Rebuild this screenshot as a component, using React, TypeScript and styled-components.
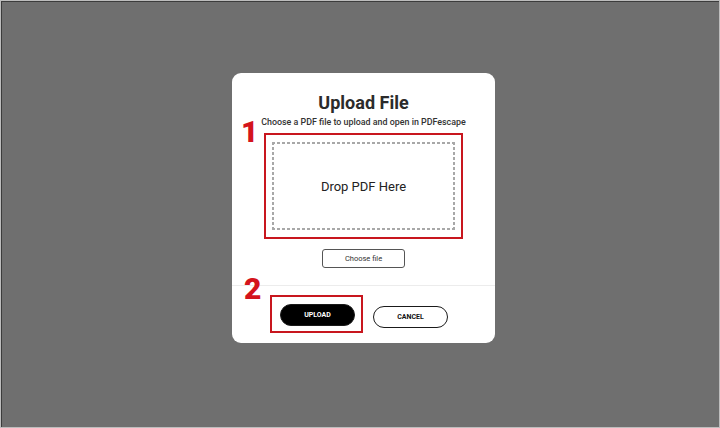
import React from "react";
import styled, { createGlobalStyle } from "styled-components";

const GlobalStyle = createGlobalStyle`
  html, body {
    margin: 0;
    padding: 0;
    background: #6f6f6f;
  }
  body {
    font-family: Roboto, "Liberation Sans", Arial, sans-serif;
  }
`;

const Screen = styled.div`
  box-sizing: border-box;
  width: 720px;
  height: 428px;
  border: 1px solid #bdbdbd;
  box-shadow: inset 1px 1px 0 #3c3c3c;
  background: #6f6f6f;
  display: flex;
  align-items: flex-start;
  justify-content: flex-start;
  padding: 72px 0 0 231px;
`;

const Modal = styled.section`
  box-sizing: border-box;
  width: 263px;
  height: 270px;
  background: #fff;
  border-radius: 9px;
  display: flex;
  flex-direction: column;
`;

const Body = styled.div`
  display: flex;
  flex-direction: column;
  align-items: center;
  padding-top: 20px;
  height: 213px;
  box-sizing: border-box;
  border-bottom: 1px solid #ececec;
`;

const Title = styled.h2`
  margin: 0;
  font-size: 18px;
  line-height: 20px;
  font-weight: 700;
  color: #2b2b2b;
`;

const Subtitle = styled.p`
  margin: 4px 0 0;
  font-size: 8.9px;
  line-height: 10px;
  font-weight: 500;
  color: #333;
`;

const Step = styled.div<{ $mt?: number }>`
  display: flex;
  align-items: flex-start;
  position: relative;
  margin-top: ${(p) => p.$mt ?? 0}px;
`;

const StepNumber = styled.span<{ $top: number; $left: number }>`
  position: absolute;
  top: ${(p) => p.$top}px;
  left: ${(p) => p.$left}px;
  font-family: Roboto, "Liberation Sans", sans-serif;
  font-weight: 900;
  font-size: 30px;
  line-height: 30px;
  color: #d4141c;
`;

const Highlight = styled.div<{ $w: number; $h: number; $pad?: string }>`
  box-sizing: border-box;
  width: ${(p) => p.$w}px;
  height: ${(p) => p.$h}px;
  border: 2px solid #c8161e;
  display: flex;
  align-items: ${(p) => (p.$pad ? "flex-start" : "center")};
  justify-content: ${(p) => (p.$pad ? "flex-start" : "center")};
  padding: ${(p) => p.$pad ?? "0"};
`;

const dash = "#a8a8a8";

const DropZone = styled.div`
  box-sizing: border-box;
  width: 183px;
  height: 88px;
  background-image:
    repeating-linear-gradient(90deg, ${dash} 0 3px, transparent 3px 5px),
    repeating-linear-gradient(90deg, ${dash} 0 3px, transparent 3px 5px),
    repeating-linear-gradient(180deg, ${dash} 0 3px, transparent 3px 5px),
    repeating-linear-gradient(180deg, ${dash} 0 3px, transparent 3px 5px);
  background-size: 100% 2px, 100% 2px, 2px 100%, 2px 100%;
  background-position: 0 0, 0 100%, 0 0, 100% 0;
  background-repeat: no-repeat;
  display: flex;
  align-items: center;
  justify-content: center;
  font-size: 13px;
  color: #222;
`;

const ChooseButton = styled.button`
  box-sizing: border-box;
  margin-top: 10px;
  width: 83px;
  height: 19px;
  border: 1px solid #555;
  border-radius: 3px;
  background: #fff;
  font-family: Roboto, "Liberation Sans", sans-serif;
  font-size: 7.5px;
  color: #333;
  padding: 0;
`;

const Footer = styled.div`
  display: flex;
  align-items: flex-start;
  padding: 9px 0 0 38px;
  gap: 10px;
`;

const Pill = styled.button<{ $dark?: boolean }>`
  box-sizing: border-box;
  width: 75px;
  height: 22px;
  border-radius: 11px;
  border: 1.5px solid #1a1a1a;
  background: ${(p) => (p.$dark ? "#000" : "#fff")};
  color: ${(p) => (p.$dark ? "#fff" : "#111")};
  font-family: Roboto, "Liberation Sans", sans-serif;
  font-weight: 700;
  font-size: 7px;
  padding: 0;
`;

const CancelWrap = styled.div`
  padding-top: 9px;
`;

export default function App() {
  return (
    <>
      <GlobalStyle />
      <Screen>
        <Modal>
          <Body>
            <Title>Upload File</Title>
            <Subtitle>Choose a PDF file to upload and open in PDFescape</Subtitle>
            <Step $mt={6}>
              <StepNumber $top={-16} $left={-23}>1</StepNumber>
              <Highlight $w={199} $h={106}>
                <DropZone>Drop PDF Here</DropZone>
              </Highlight>
            </Step>
            <ChooseButton>Choose file</ChooseButton>
          </Body>
          <Footer>
            <Step>
              <StepNumber $top={-21} $left={-26}>2</StepNumber>
              <Highlight $w={93} $h={38} $pad="7px 0 0 8px">
                <Pill $dark>UPLOAD</Pill>
              </Highlight>
            </Step>
            <CancelWrap>
              <Pill>CANCEL</Pill>
            </CancelWrap>
          </Footer>
        </Modal>
      </Screen>
    </>
  );
}
